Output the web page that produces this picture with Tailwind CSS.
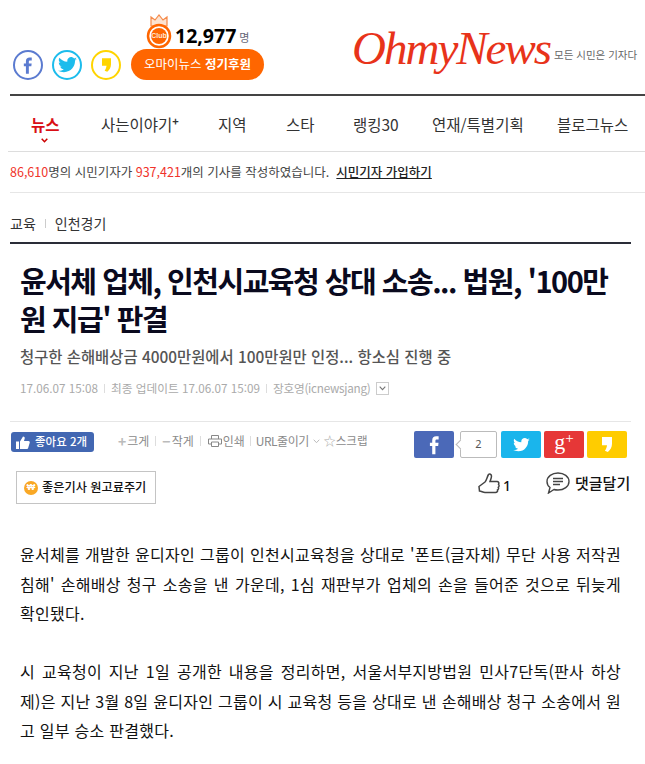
<!DOCTYPE html>
<html lang="ko">
<head>
    <meta charset="UTF-8">
    <title>OhmyNews</title>
    <script src="https://cdn.jsdelivr.net/npm/@tailwindcss/browser@4"></script>
</head>
<body class="bg-white w-[645px] h-[764px] overflow-hidden font-['Noto_Sans_CJK_KR','Noto_Sans',sans-serif]">
    <!-- top header -->
    <header class="ml-[10px] h-[96px] border-b-[2px] border-[#444] flex relative">
        <div class="w-[330px] flex items-end pb-[14px]">
            <div class="flex gap-[9px] mt-auto ml-[3px]">
                <span class="w-[30px] h-[30px] rounded-full border-2 border-[#5b7bd0] flex items-center justify-center">
                    <svg width="10" height="19" viewBox="0 0 12 20"><path d="M3.500 20V11H1V7.500h2.500V5c0-3 1.700-4.500 4.300-4.500H10.500V4H8.700C7.500 4 7 4.500 7 5.500v2h3.400L10 11H7v9z" fill="#5b7bd0"/></svg>
                </span>
                <span class="w-[30px] h-[30px] rounded-full border-2 border-[#1cbcec] flex items-center justify-center">
                    <svg width="19" height="16" viewBox="0 0 24 20"><path d="M24 2.400c-.9.400-1.800.700-2.800.800 1-.6 1.800-1.600 2.200-2.700-1 .6-2 1-3.100 1.200C19.300.7 18 0 16.600 0c-2.700 0-4.900 2.200-4.900 4.900 0 .4 0 .8.100 1.100C7.700 5.800 4.100 3.900 1.700.9c-.4.700-.7 1.600-.7 2.500 0 1.700.9 3.200 2.200 4.100-.8 0-1.600-.2-2.200-.6v.1c0 2.400 1.700 4.400 3.900 4.800-.4.100-.8.200-1.300.2-.3 0-.6 0-.9-.1.600 2 2.400 3.400 4.600 3.400-1.700 1.300-3.800 2.100-6.100 2.100-.4 0-.8 0-1.200-.1C2.200 18.200 4.800 19 7.500 19c9.100 0 14-7.500 14-14v-.6c1-.7 1.800-1.600 2.500-2z" fill="#1cbcec"/></svg>
                </span>
                <span class="w-[30px] h-[30px] rounded-full border-2 border-[#ffd400] flex items-center justify-center">
                    <svg width="9" height="16" viewBox="0 0 12 18"><path d="M0 0h12v8c0 4-2 7.500-5 10L3.500 16.500C5 14.500 5.800 12.500 6 10H0z" fill="#ffd400"/></svg>
                </span>
            </div>
            <div class="absolute left-[121px] top-[14px] w-[133px]">
                <div class="flex items-end h-[33px] pl-[44px]">
                    <svg class="absolute left-[15px] top-0 w-[26px] h-[36px]" viewBox="0 0 26 36">
                        <path d="M5 12V3l4 3 4-5 4 5 4-3v9z" fill="#fde3d0" stroke="#f58a4a" stroke-width="1.200"/>
                        <circle cx="13" cy="22" r="11" fill="#fff" stroke="#ff6600" stroke-width="2.500"/>
                        <circle cx="13" cy="22" r="8" fill="#ff6600"/>
                    </svg>
                    <span class="absolute left-[15px] top-[16px] w-[26px] text-center text-[7px] leading-[12px] font-bold text-[#ffe6d5] font-['Liberation_Sans']">Club</span>
                    <span class="text-[19.500px] leading-[22px] font-bold text-black font-['Noto_Sans']">12,977</span>
                    <span class="ml-[3px] text-[11px] leading-[19px] text-[#667]">명</span>
                </div>
                <div class="h-[31px] rounded-full bg-[#ff6600] text-white text-[12.500px] flex items-center justify-center mt-[2px]">
                    오마이뉴스&nbsp;<b class="font-bold">정기후원</b>
                </div>
            </div>
        </div>
        <div class="flex items-center pt-[2px]">
            <span class="font-['Liberation_Serif'] italic text-[#e8331a] text-[47px] leading-[60px] tracking-[-2px] ml-[12px] w-[202px] whitespace-nowrap">OhmyNews</span>
            <span class="text-[10.500px] pt-[14px] text-[#666] whitespace-nowrap">모든 시민은 기자다</span>
        </div>
    </header>

    <!-- menu -->
    <nav class="ml-[8px] h-[56px] border-b border-[#ddd] flex items-start pl-[23px] pt-[17px] text-[15.500px] leading-[22px] text-[#333] whitespace-nowrap">
        <span class="relative w-[70px] text-[#d90f16] font-bold">뉴스
            <svg class="absolute left-[10px] top-[25px]" width="7" height="5" viewBox="0 0 7 5"><path d="M.7.700 3.500 3.700 6.300.700" fill="none" stroke="#c00" stroke-width="1.500"/></svg>
        </span>
        <span class="w-[117px]">사는이야기<sup class="text-[11px] font-bold">+</sup></span>
        <span class="w-[68px]">지역</span>
        <span class="w-[67px]">스타</span>
        <span class="w-[79px]">랭킹30</span>
        <span class="w-[125px]">연재/특별기획</span>
        <span>블로그뉴스</span>
    </nav>

    <!-- reporter counts -->
    <div class="ml-[10px] h-[41px] border-b border-[#e6e6e6] flex items-center text-[12.500px] text-[#444] whitespace-nowrap">
        <span class="text-[#f0332a]">86,610</span>명의 시민기자가&nbsp;<span class="text-[#f0332a]">937,421</span>개의 기사를 작성하였습니다.
        <u class="ml-[7px] text-[#222] font-medium">시민기자 가입하기</u>
    </div>

    <!-- breadcrumb -->
    <div class="ml-[10px] mr-[14px] h-[51px] border-b-[2px] border-[#2a2d38] flex items-center pt-[12px] text-[14px] text-[#333]">
        교육<span class="w-px h-[9px] bg-[#ccc] mx-[9px]"></span>인천경기
    </div>

    <!-- headline -->
    <h1 class="ml-[20px] mr-[20px] mt-[17px] text-[29px] leading-[38px] font-bold tracking-[-1.500px] text-[#0a0a1e]">윤서체 업체, 인천시교육청 상대 소송... 법원, '100만원 지급' 판결</h1>
    <p class="ml-[20px] mt-[7px] text-[15.400px] leading-[24px] font-medium text-[#555]">청구한 손해배상금 4000만원에서 100만원만 인정... 항소심 진행 중</p>
    <div class="ml-[20px] mt-[11px] flex items-center text-[11.700px] leading-[18px] text-[#aaa] whitespace-nowrap">
        17.06.07 15:08<span class="w-px h-[9px] bg-[#ddd] mx-[6px]"></span>최종 업데이트 17.06.07 15:09<span class="w-px h-[9px] bg-[#ddd] mx-[6px]"></span><span class="tracking-[-0.250px]">장호영(icnewsjang)</span>
        <span class="ml-[5px] w-[13px] h-[13px] border border-[#ccc] flex items-center justify-center">
            <svg width="7" height="5" viewBox="0 0 7 5"><path d="M.7.700 3.500 3.700 6.300.700" fill="none" stroke="#777" stroke-width="1.100"/></svg>
        </span>
    </div>

    <!-- tools -->
    <div class="ml-[10px] mr-[14px] mt-[24px] border-t border-[#e6e6e6] relative h-[85px]">
        <div class="absolute left-[1px] top-[10px] w-[83px] h-[20px] rounded-[3px] bg-[#4267b2] text-white text-[11.500px] font-medium flex items-center">
            <svg class="ml-[5px] mr-[5px]" width="14" height="13" viewBox="0 0 14 13"><path d="M0 5.500h3V13H0zM4 5.500 7 .5c1.200 0 2 .8 1.700 2L8 5h4.500c1 0 1.500 1 1.200 1.800L12 12.500c-.2.300-.5.500-1 .5H4z" fill="#fff"/></svg>
            좋아요 2개
        </div>
        <div class="absolute left-[108px] top-[9px] h-[20px] flex items-center text-[12px] text-[#8a8a8a] whitespace-nowrap">
            <span class="text-[14px] leading-none mr-px font-bold text-[#bbb]">+</span>크게<span class="w-px h-[10px] bg-[#ddd] mx-[6px]"></span>
            <span class="text-[14px] leading-none mr-px font-bold text-[#bbb]">−</span>작게<span class="w-px h-[10px] bg-[#ddd] mx-[6px]"></span>
            <svg class="mx-px" width="14" height="12" viewBox="0 0 14 12"><path d="M3.500 4V.5h7V4M3 9H.5V4h13v5H11M3.500 7h7v4.500h-7z" fill="none" stroke="#888"/></svg>
            인쇄<span class="w-px h-[10px] bg-[#ddd] mx-[5px]"></span>
            <span class="tracking-[-0.500px]">URL줄이기</span>
            <svg class="mx-[4px]" width="7" height="5" viewBox="0 0 7 5"><path d="M.7.700 3.500 3.700 6.300.700" fill="none" stroke="#bbb"/></svg>
            <span class="text-[12px] text-[#aaa]">☆</span><span class="text-[11.500px]">스크랩</span>
        </div>
        <div class="absolute left-[404px] top-[9px] flex h-[27px]">
            <span class="w-[40px] rounded-[2px] bg-[#4b69b8] flex items-center justify-center">
                <svg width="11" height="20" viewBox="0 0 12 20"><path d="M3.500 20V11H1V7.500h2.500V5c0-3 1.700-4.500 4.300-4.500H10.500V4H8.700C7.500 4 7 4.500 7 5.500v2h3.400L10 11H7v9z" fill="#fff"/></svg>
            </span>
            <span class="relative ml-[6px] w-[37px] border border-[#bbb] rounded-[2px] flex items-center justify-center text-[11px] text-[#555] bg-white font-['Noto_Sans']">2
                <span class="absolute left-[-4px] top-[9px] w-[7px] h-[7px] rotate-45 bg-white border-l border-b border-[#bbb]"></span>
            </span>
            <span class="ml-[4px] w-[40px] rounded-[2px] bg-[#1ab5ec] flex items-center justify-center">
                <svg width="17" height="14" viewBox="0 0 24 20"><path d="M24 2.400c-.9.400-1.800.700-2.800.800 1-.6 1.800-1.600 2.200-2.700-1 .6-2 1-3.100 1.200C19.300.7 18 0 16.600 0c-2.700 0-4.900 2.200-4.900 4.900 0 .4 0 .8.100 1.100C7.700 5.800 4.100 3.900 1.700.9c-.4.700-.7 1.600-.7 2.500 0 1.700.9 3.200 2.200 4.100-.8 0-1.600-.2-2.200-.6v.1c0 2.400 1.700 4.400 3.900 4.800-.4.100-.8.200-1.300.2-.3 0-.6 0-.9-.1.600 2 2.400 3.400 4.600 3.400-1.700 1.300-3.800 2.100-6.100 2.100-.4 0-.8 0-1.200-.1C2.200 18.200 4.800 19 7.500 19c9.100 0 14-7.500 14-14v-.6c1-.7 1.800-1.600 2.500-2z" fill="#fff"/></svg>
            </span>
            <span class="ml-[3px] w-[40px] rounded-[2px] bg-[#e63737] text-white flex items-center justify-center font-['Liberation_Serif'] text-[22px] leading-none pb-[5px]">g<span class="text-[15px] leading-none mb-[8px]">+</span></span>
            <span class="ml-[3px] w-[40px] rounded-[2px] bg-[#ffcc00] flex items-center justify-center">
                <svg width="10" height="17" viewBox="0 0 12 18"><path d="M0 0h12v8c0 4-2 7.500-5 10L3.500 16.500C5 14.500 5.800 12.500 6 10H0z" fill="#fff"/></svg>
            </span>
        </div>
        <div class="absolute left-[6px] top-[49px] w-[140px] h-[33px] border border-[#c4c4c4] flex items-center pl-[7px] text-[12.200px] font-medium text-[#111] whitespace-nowrap">
            <span class="w-[14px] h-[14px] rounded-full bg-[#f9a825] text-white text-[9px] font-bold flex items-center justify-center mr-[4px] font-['Liberation_Sans']">₩</span>
            좋은기사 원고료주기
        </div>
        <div class="absolute left-[468px] top-[50px] flex items-center h-[26px] text-[14px] text-[#111]">
            <svg width="22" height="24" viewBox="0 0 22 24"><path d="M1 13.500 7 9c1.500-1.500 2-5 3.500-7.500 1-1 3-.3 3 1.500 0 2-1 4-1.500 5.500h7c1.500 0 2.300 1.500 1.500 2.800.8.800.8 2.200-.2 3 .5 1 .2 2.200-.8 2.700.3 1.500-.5 2.500-2 2.500H7c-2 0-3-1-5.500-1.500z" fill="none" stroke="#444" stroke-width="1.500"/></svg>
            <span class="ml-[3px] font-['Noto_Sans'] font-medium">1</span>
        </div>
        <div class="absolute left-[536px] top-[48px] flex items-center h-[26px] text-[15px] font-medium text-[#111] whitespace-nowrap">
            <svg width="24" height="22" viewBox="0 0 24 22"><path d="M12 1c6 0 11 3.500 11 8.500S18 18 12 18c-1.500 0-2.500 0-4-.5L2.500 21 4 15.500C2 14 1 12 1 9.500 1 4.500 6 1 12 1zM7 6.500h10M7 9.500h10M7 12.500h7" fill="none" stroke="#444" stroke-width="1.400"/></svg>
            <span class="ml-[5px]">댓글달기</span>
        </div>
    </div>

    <!-- article body -->
    <article class="ml-[20px] mr-[24px] mt-[34px] text-[16px] tracking-[0.270px] leading-[29.500px] text-[#111] text-justify">
        <p>윤서체를 개발한 윤디자인 그룹이 인천시교육청을 상대로 '폰트(글자체) 무단 사용 저작권 침해' 손해배상 청구 소송을 낸 가운데, 1심 재판부가 업체의 손을 들어준 것으로 뒤늦게 확인됐다.</p>
        <p class="mt-[28.500px]">시 교육청이 지난 1일 공개한 내용을 정리하면, 서울서부지방법원 민사7단독(판사 하상제)은 지난 3월 8일 윤디자인 그룹이 시 교육청 등을 상대로 낸 손해배상 청구 소송에서 원고 일부 승소 판결했다.</p>
    </article>
</body>
</html>
